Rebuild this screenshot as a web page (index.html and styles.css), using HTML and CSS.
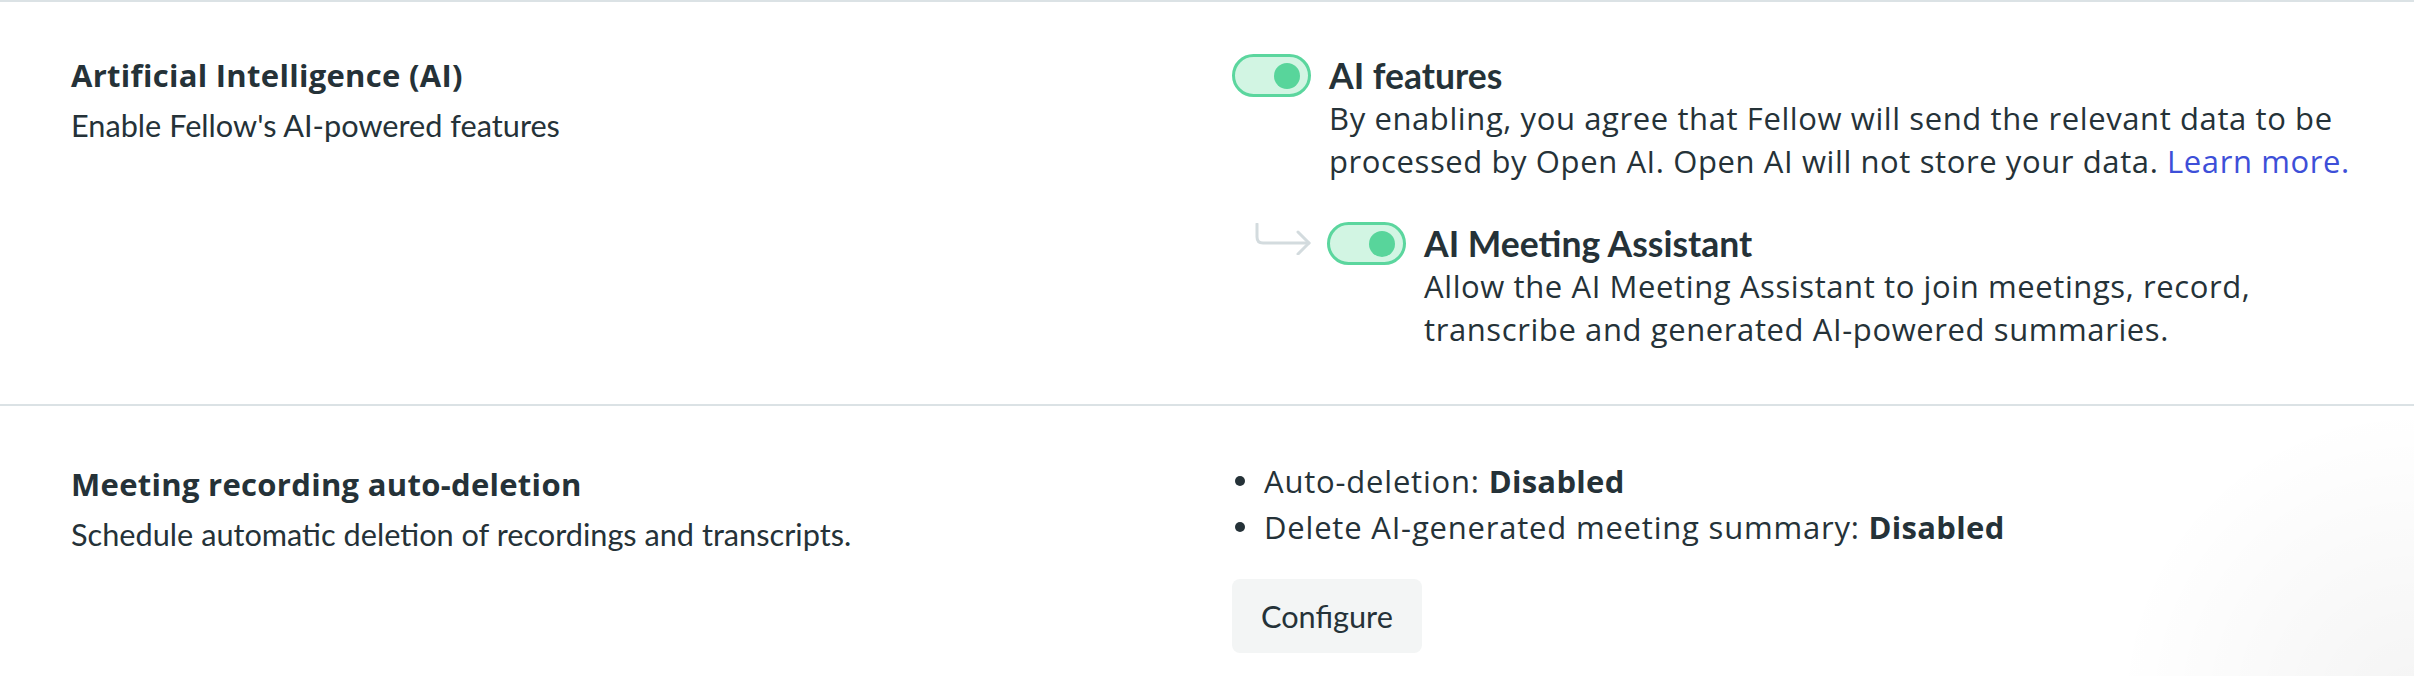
FILE: index.html
```html
<!DOCTYPE html>
<html lang="en">
<head>
<meta charset="utf-8">
<title>AI settings</title>
<link rel="stylesheet" href="styles.css">
</head>
<body>
<main class="settings">
  <section class="setting">
    <div class="setting-info">
      <h2 class="setting-title">Artificial Intelligence (AI)</h2>
      <p class="setting-desc">Enable Fellow's AI-powered features</p>
    </div>
    <div class="setting-control">
      <div class="toggle-row">
        <span class="toggle is-on"><span class="toggle-knob"></span></span>
        <div class="toggle-text">
          <h3 class="toggle-title">AI features</h3>
          <p class="toggle-desc">By enabling, you agree that Fellow will send the relevant data to be<br>processed by Open AI. Open AI will not store your data. <a class="link" href="#">Learn more.</a></p>
        </div>
      </div>
      <div class="toggle-row toggle-row--sub">
        <svg class="sub-arrow" width="58" height="32" viewBox="0 0 58 32" aria-hidden="true">
          <path d="M3 1 V14 Q3 20 9 20 H55" />
          <path d="M44 9 L55 20 L44 31" />
        </svg>
        <span class="toggle is-on"><span class="toggle-knob"></span></span>
        <div class="toggle-text">
          <h3 class="toggle-title">AI Meeting Assistant</h3>
          <p class="toggle-desc">Allow the AI Meeting Assistant to join meetings, record,<br>transcribe and generated AI-powered summaries.</p>
        </div>
      </div>
    </div>
  </section>
  <section class="setting setting--recording">
    <div class="setting-info">
      <h2 class="setting-title">Meeting recording auto-deletion</h2>
      <p class="setting-desc">Schedule automatic deletion of recordings and transcripts.</p>
    </div>
    <div class="setting-control">
      <ul class="status-list">
        <li>Auto-deletion: <strong>Disabled</strong></li>
        <li>Delete AI-generated meeting summary: <strong>Disabled</strong></li>
      </ul>
      <button class="btn" type="button">Configure</button>
    </div>
  </section>
</main>
</body>
</html>
```
FILE: styles.css
```css
* {
  box-sizing: border-box;
}

body {
  margin: 0;
  min-height: 100vh;
  color: #253238;
  font-family: "Open Sans", "Noto Sans", sans-serif;
  background:
    radial-gradient(circle at 100% 100%, rgba(0, 0, 0, 0.045), rgba(0, 0, 0, 0) 300px),
    #ffffff;
}

.settings {
  border-top: 2px solid #dbe2e5;
}

.setting {
  display: grid;
  grid-template-columns: 1111px minmax(0, 1fr);
  column-gap: 50px;
  padding: 52px 20px 53px 71px;
}

.setting + .setting {
  border-top: 2px solid #dbe2e5;
}

.setting--recording .setting-info {
  padding-top: 5px;
}

.setting-title {
  margin: 0;
  font-size: 31px;
  line-height: 42px;
  font-weight: 700;
  letter-spacing: 0.3px;
}

.setting-desc {
  margin: 12px 0 0;
  font-family: "Lato", sans-serif;
  font-size: 30.7px;
  line-height: 36px;
}

.setting-control {
  display: flex;
  flex-direction: column;
  align-items: flex-start;
}

.toggle-row {
  display: flex;
  align-items: flex-start;
  gap: 18px;
}

.toggle-row--sub {
  margin-top: 39px;
  padding-left: 22px;
  gap: 0;
}

.toggle-row--sub .toggle {
  margin-left: 15px;
  margin-right: 18px;
}

.sub-arrow {
  flex: none;
  margin-top: 1px;
  fill: none;
  stroke: #d3dbde;
  stroke-width: 3;
  stroke-linecap: round;
  stroke-linejoin: round;
}

.toggle {
  flex: none;
  display: flex;
  align-items: center;
  justify-content: flex-end;
  width: 79px;
  height: 43px;
  padding-right: 8px;
  border: 3px solid #5bd69e;
  border-radius: 22px;
  background: #d2f5e3;
}

.toggle-knob {
  width: 26px;
  height: 26px;
  border-radius: 50%;
  background: #58d59b;
}

.toggle-title {
  margin: 0;
  font-family: "Lato", sans-serif;
  font-size: 35.5px;
  line-height: 43px;
  font-weight: 700;
}

.toggle-desc {
  margin: 0;
  font-size: 31px;
  line-height: 43px;
  letter-spacing: 0.6px;
  white-space: nowrap;
}

.link {
  color: #3d4fd8;
  text-decoration: none;
}

.status-list {
  margin: 0;
  padding: 0;
  list-style: none;
  font-size: 31px;
  line-height: 46px;
  letter-spacing: 0.8px;
}

.status-list li {
  display: flex;
  align-items: center;
  white-space: pre;
}

.status-list li::before {
  content: "";
  flex: none;
  width: 10px;
  height: 10px;
  margin: 0 19px 0 3px;
  border-radius: 50%;
  background: #253238;
}

.status-list strong {
  font-weight: 700;
  letter-spacing: 0.3px;
}

.btn {
  margin-top: 29px;
  height: 74px;
  padding: 0 29px;
  border: none;
  border-radius: 8px;
  background: #f3f5f5;
  color: #253238;
  font-family: "Lato", sans-serif;
  font-size: 30.7px;
}
```
